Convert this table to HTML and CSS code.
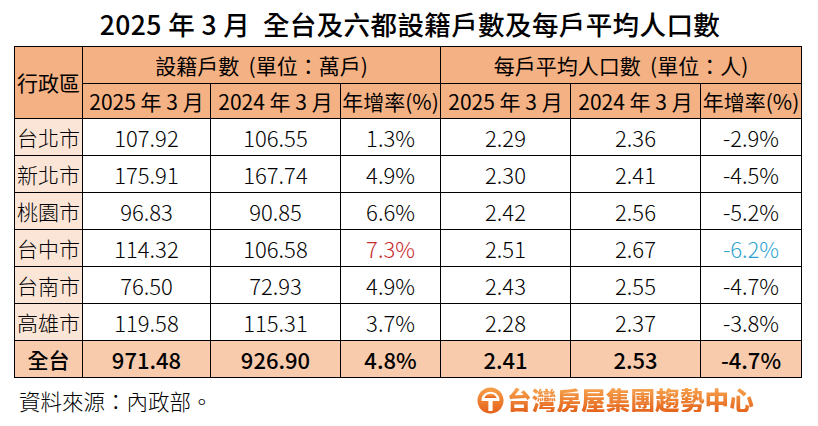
FILE: index.html
```html
<!DOCTYPE html>
<html lang="zh-Hant">
<head>
<meta charset="utf-8">
<link rel="stylesheet" href="styles.css">
</head>
<body>
<div class="page">
  <h1 class="title">2025 年 3 月&nbsp;&nbsp;全台及六都設籍戶數及每戶平均人口數</h1>
  <table class="data">
    <colgroup>
      <col class="c-area"><col class="c-a"><col class="c-b"><col class="c-c"><col class="c-b"><col class="c-b"><col class="c-d">
    </colgroup>
    <thead>
      <tr class="h1">
        <th rowspan="2" class="area-head">行政區</th>
        <th colspan="3">設籍戶數&nbsp; (單位：萬戶)</th>
        <th colspan="3">每戶平均人口數&nbsp; (單位：人)</th>
      </tr>
      <tr class="h2">
        <th>2025 年 3 月</th><th>2024 年 3 月</th><th>年增率(%)</th>
        <th>2025 年 3 月</th><th>2024 年 3 月</th><th>年增率(%)</th>
      </tr>
    </thead>
    <tbody>
      <tr><td class="area">台北市</td><td>107.92</td><td>106.55</td><td>1.3%</td><td>2.29</td><td>2.36</td><td>-2.9%</td></tr>
      <tr><td class="area">新北市</td><td>175.91</td><td>167.74</td><td>4.9%</td><td>2.30</td><td>2.41</td><td>-4.5%</td></tr>
      <tr><td class="area">桃園市</td><td>96.83</td><td>90.85</td><td>6.6%</td><td>2.42</td><td>2.56</td><td>-5.2%</td></tr>
      <tr><td class="area">台中市</td><td>114.32</td><td>106.58</td><td class="up">7.3%</td><td>2.51</td><td>2.67</td><td class="down">-6.2%</td></tr>
      <tr><td class="area">台南市</td><td>76.50</td><td>72.93</td><td>4.9%</td><td>2.43</td><td>2.55</td><td>-4.7%</td></tr>
      <tr><td class="area">高雄市</td><td>119.58</td><td>115.31</td><td>3.7%</td><td>2.28</td><td>2.37</td><td>-3.8%</td></tr>
      <tr class="total"><td class="area-total">全台</td><td>971.48</td><td>926.90</td><td>4.8%</td><td>2.41</td><td>2.53</td><td>-4.7%</td></tr>
    </tbody>
  </table>
  <div class="footer">
    <span class="source">資料來源：內政部。</span>
    <div class="brand">
      <svg class="brand-icon" viewBox="0 0 28 28" width="27" height="27">
        <defs>
          <linearGradient id="og" x1="0" y1="0" x2="0" y2="1">
            <stop offset="0" stop-color="#f7a04a"/>
            <stop offset="1" stop-color="#e5601a"/>
          </linearGradient>
        </defs>
        <circle cx="14" cy="14" r="13.5" fill="url(#og)"/>
        <path d="M4.8 12 A9.5 9.5 0 0 1 23.2 12 L23.2 14.4 L16.2 14.4 L16.2 25 L11.8 25 L11.8 14.4 L4.8 14.4 Z" fill="#fff"/>
        <path d="M7.6 11.4 A6.8 6.8 0 0 1 20.4 11.4 Z" fill="url(#og)"/>
      </svg>
      <span class="brand-text">台灣房屋集團趨勢中心</span>
    </div>
  </div>
</div>
</body>
</html>
```

FILE: styles.css
```css
html, body {
  margin: 0;
  padding: 0;
  background: #fff;
}

.page {
  width: 818px;
  height: 426px;
  font-family: "Noto Sans CJK TC", "Noto Sans", sans-serif;
  color: #000;
}

.title {
  margin: 0;
  height: 46px;
  display: flex;
  align-items: center;
  justify-content: center;
  font-size: 26.5px;
  font-weight: 500;
  letter-spacing: 0.4px;
  padding-left: 2px;
}

.data {
  margin-left: 14px;
  border-collapse: collapse;
  table-layout: fixed;
  width: 787px;
  font-size: 22px;
  line-height: 1;
}

.c-area { width: 68px; }
.c-a { width: 128px; }
.c-b { width: 130px; }
.c-c { width: 100px; }
.c-d { width: 101px; }

.data th,
.data td {
  border: 1px solid #000;
  padding: 0;
  text-align: center;
  vertical-align: middle;
  white-space: nowrap;
}

.data th {
  background: #f4b183;
  font-weight: 400;
  font-size: 21px;
}

.h1 { height: 37px; }
.h2 { height: 35px; }

.data tbody tr { height: 37px; }

.data td {
  font-weight: 300;
}

.data td.area {
  background: #fbe5d6;
  font-weight: 300;
  font-size: 21px;
}

.data .total td {
  background: #f8cbad;
  font-weight: 500;
}

.data .total td.area-total {
  font-size: 21px;
}

.up { color: #c8282e; }
.down { color: #2ea3d1; }

.footer {
  height: 44px;
  display: flex;
  align-items: center;
  padding: 0 64px 0 19px;
}

.source {
  font-size: 21.5px;
  font-weight: 300;
}

.brand {
  margin-left: auto;
  display: flex;
  align-items: center;
  gap: 3px;
}

.brand-icon {
  display: block;
}

.brand-text {
  font-size: 24.5px;
  font-weight: 900;
  line-height: 1;
  letter-spacing: 0.2px;
  color: #ee7a2a;
  background: linear-gradient(#f6a24e, #e4641c);
  -webkit-background-clip: text;
  background-clip: text;
  -webkit-text-fill-color: transparent;
}
```
